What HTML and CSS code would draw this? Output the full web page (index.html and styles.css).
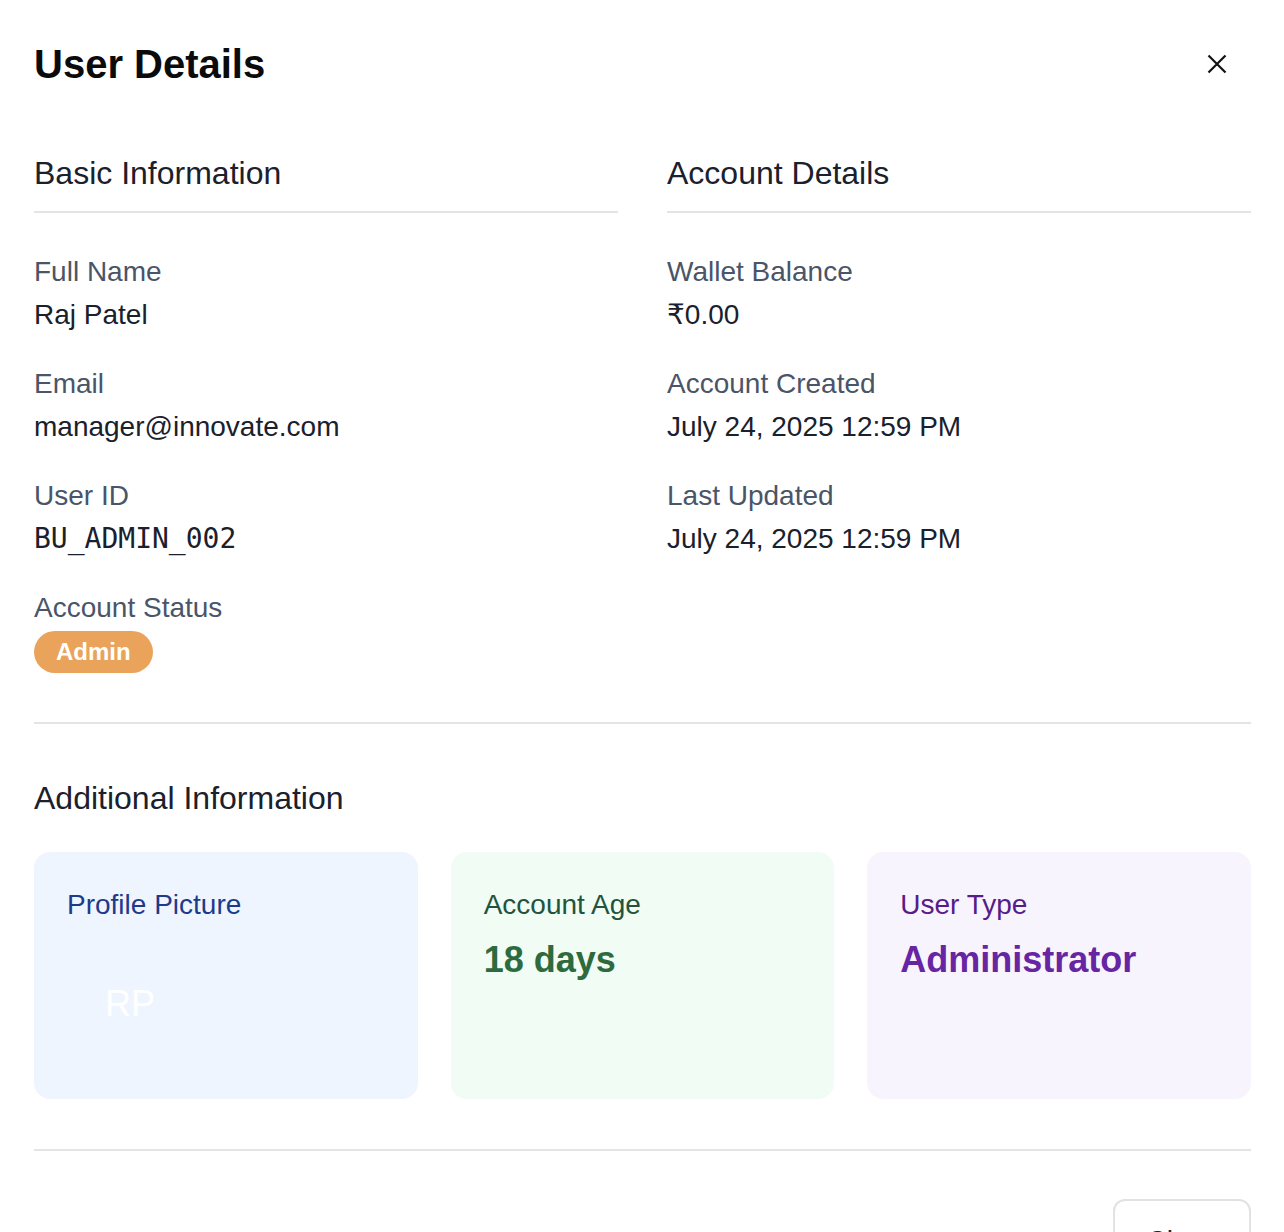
FILE: index.html
```html
<!DOCTYPE html>
<html lang="en">
<head>
<meta charset="utf-8">
<title>User Details</title>
<link rel="stylesheet" href="styles.css">
</head>
<body>
<div class="modal">
  <header class="modal-header">
    <h1 class="modal-title">User Details</h1>
    <button class="close-btn" aria-label="Close">
      <svg width="20" height="20" viewBox="0 0 20 20" fill="none" stroke="#111" stroke-width="2.2">
        <path d="M1.5 1.5 L18.5 18.5 M18.5 1.5 L1.5 18.5"/>
      </svg>
    </button>
  </header>

  <div class="columns">
    <section class="col">
      <h2 class="section-title">Basic Information</h2>
      <div class="fields">
        <div class="field">
          <div class="label">Full Name</div>
          <div class="value">Raj Patel</div>
        </div>
        <div class="field">
          <div class="label">Email</div>
          <div class="value">manager@innovate.com</div>
        </div>
        <div class="field">
          <div class="label">User ID</div>
          <div class="value mono">BU_ADMIN_002</div>
        </div>
        <div class="field">
          <div class="label">Account Status</div>
          <span class="badge">Admin</span>
        </div>
      </div>
    </section>
    <section class="col">
      <h2 class="section-title">Account Details</h2>
      <div class="fields">
        <div class="field">
          <div class="label">Wallet Balance</div>
          <div class="value">₹0.00</div>
        </div>
        <div class="field">
          <div class="label">Account Created</div>
          <div class="value">July 24, 2025 12:59 PM</div>
        </div>
        <div class="field">
          <div class="label">Last Updated</div>
          <div class="value">July 24, 2025 12:59 PM</div>
        </div>
      </div>
    </section>
  </div>

  <hr class="divider divider-top">

  <section class="additional">
    <h2 class="additional-title">Additional Information</h2>
    <div class="cards">
      <div class="card card-blue">
        <div class="card-label">Profile Picture</div>
        <div class="avatar">RP</div>
      </div>
      <div class="card card-green">
        <div class="card-label">Account Age</div>
        <div class="card-value">18 days</div>
      </div>
      <div class="card card-purple">
        <div class="card-label">User Type</div>
        <div class="card-value">Administrator</div>
      </div>
    </div>
  </section>

  <hr class="divider divider-bottom">

  <div class="footer">
    <button class="btn">Close</button>
  </div>
</div>
</body>
</html>
```

FILE: styles.css
```css
html, body {
  margin: 0;
  padding: 0;
  background: #ffffff;
  overflow: hidden;
}

body {
  font-family: "Liberation Sans", Arial, "DejaVu Sans", sans-serif;
  color: #1a202c;
}

.modal {
  padding: 40px 33px 0 34px;
}

.modal-header {
  display: flex;
  justify-content: space-between;
  align-items: center;
}

.modal-title {
  margin: 0;
  font-size: 40px;
  line-height: 48px;
  font-weight: 700;
  color: #0b0b0b;
}

.close-btn {
  width: 40px;
  height: 40px;
  margin-right: 14px;
  border: none;
  background: transparent;
  padding: 0;
  display: flex;
  align-items: center;
  justify-content: center;
  cursor: pointer;
}

.columns {
  margin-top: 67px;
  display: grid;
  grid-template-columns: 1fr 1fr;
  column-gap: 49px;
  align-items: start;
}

.section-title {
  margin: 0;
  font-size: 32px;
  line-height: 36px;
  font-weight: 400;
  color: #1a202c;
  padding-bottom: 20px;
  border-bottom: 2px solid #e4e4e4;
}

.fields {
  margin-top: 39px;
  display: flex;
  flex-direction: column;
  gap: 28px;
}

.field {
  display: flex;
  flex-direction: column;
  align-items: flex-start;
}

.label {
  font-size: 28px;
  line-height: 40px;
  color: #4a5568;
}

.value {
  margin-top: 2px;
  font-size: 28px;
  line-height: 42px;
  color: #1a202c;
}

.mono {
  font-family: "DejaVu Sans Mono", "Liberation Mono", monospace;
  font-size: 28px;
}

.badge {
  margin-top: 3px;
  display: inline-block;
  height: 42px;
  line-height: 42px;
  padding: 0 22px;
  border-radius: 21px;
  background: #eaa35a;
  color: #ffffff;
  font-size: 24px;
  font-weight: 700;
}

.divider {
  border: none;
  height: 2px;
  background: #e4e4e4;
  margin: 0;
}

.divider-top {
  margin-top: 49px;
}

.additional-title {
  margin: 56px 0 0;
  font-size: 32px;
  line-height: 36px;
  font-weight: 400;
  color: #1a202c;
}

.cards {
  margin-top: 36px;
  display: grid;
  grid-template-columns: repeat(3, 1fr);
  gap: 33px;
}

.card {
  border-radius: 16px;
  padding: 33px 33px 32px;
}

.card-label {
  font-size: 28px;
  line-height: 40px;
}

.card-value {
  margin-top: 13px;
  font-size: 36px;
  line-height: 44px;
  font-weight: 700;
}

.card-blue {
  background: #eff5fe;
}
.card-blue .card-label {
  color: #1e3a8a;
}

.avatar {
  margin-top: 16px;
  width: 126px;
  height: 126px;
  display: flex;
  align-items: center;
  justify-content: center;
  color: #ffffff;
  font-size: 36px;
}

.card-green {
  background: #f0fcf4;
}
.card-green .card-label {
  color: #22543d;
}
.card-green .card-value {
  color: #2d6a3e;
}

.card-purple {
  background: #f8f4fd;
}
.card-purple .card-label {
  color: #571c87;
}
.card-purple .card-value {
  color: #6625a3;
}

.divider-bottom {
  margin-top: 50px;
}

.footer {
  margin-top: 48px;
  display: flex;
  justify-content: flex-end;
}

.btn {
  font-family: "Liberation Sans", Arial, sans-serif;
  font-size: 28px;
  line-height: 40px;
  padding: 20px 31px;
  background: #ffffff;
  color: #1a202c;
  border: 2px solid #e2e2e2;
  border-radius: 12px;
}
```
